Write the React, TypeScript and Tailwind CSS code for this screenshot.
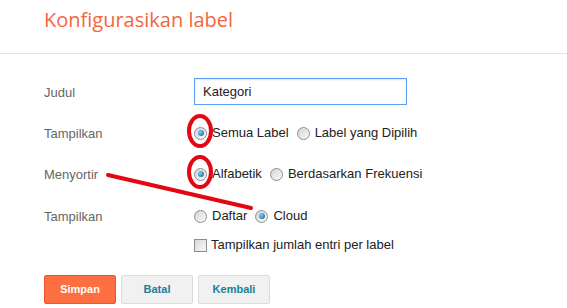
import React from 'react'

const Radio = ({ checked }: { checked?: boolean }) => (
    <span className="relative inline-block w-[13px] h-[13px] rounded-full border border-[#8d8d8d] bg-gradient-to-br from-[#d4d4d4] to-[#fafafa] shrink-0">
        {checked && (
            <span className="absolute left-[2.5px] top-[2.5px] w-[6px] h-[6px] rounded-full bg-[radial-gradient(circle_at_35%_35%,#7fd0ff,#0a5a8a)]" />
        )}
    </span>
)

const Option = ({ checked, label }: { checked?: boolean; label: string }) => (
    <label className="flex items-center gap-[5px] text-[13px] text-[#222]">
        <Radio checked={checked} />
        <span>{label}</span>
    </label>
)

export default function App() {
    return (
        <div className="relative w-[567px] h-[308px] bg-white overflow-hidden font-['Liberation_Sans',Arial,sans-serif]">
            <div className="h-[54px] border-b border-[#e5e5e5] pl-[44px] pt-[6px]">
                <h1 className="font-['Open_Sans',sans-serif] text-[20px] text-[#f4663d] leading-[28px]">
                    Konfigurasikan label
                </h1>
            </div>

            <div className="pl-[44px] pt-[24px] flex flex-col">
                <div className="flex items-center h-[27px]">
                    <span className="w-[150px] text-[13px] text-[#666] pt-[2px]">Judul</span>
                    <div className="w-[213px] h-[27px] border border-[#5a9ef5] px-[8px] flex items-center text-[13px] text-[#222] shadow-[inset_0_1px_2px_rgba(0,0,0,0.1)]">
                        Kategori
                    </div>
                </div>

                <div className="flex items-center h-[20px] mt-[18px]">
                    <span className="w-[150px] text-[13px] text-[#666] pt-[2px]">Tampilkan</span>
                    <div className="flex items-center gap-[8px]">
                        <Option checked label="Semua Label" />
                        <Option label="Label yang Dipilih" />
                    </div>
                </div>

                <div className="flex items-center h-[20px] mt-[21px]">
                    <span className="w-[150px] text-[13px] text-[#666] pt-[2px]">Menyortir</span>
                    <div className="flex items-center gap-[8px]">
                        <Option checked label="Alfabetik" />
                        <Option label="Berdasarkan Frekuensi" />
                    </div>
                </div>

                <div className="flex items-center h-[20px] mt-[22px]">
                    <span className="w-[150px] text-[13px] text-[#666] pt-[2px]">Tampilkan</span>
                    <div className="flex items-center gap-[8px]">
                        <Option label="Daftar" />
                        <Option checked label="Cloud" />
                    </div>
                </div>

                <div className="flex items-center h-[20px] mt-[9px] pl-[150px]">
                    <label className="flex items-center gap-[4px] text-[13px] text-[#222]">
                        <span className="w-[13px] h-[13px] border border-[#8d8d8d] bg-gradient-to-br from-[#d8d8d8] to-[#fafafa]" />
                        <span>Tampilkan jumlah entri per label</span>
                    </label>
                </div>

                <div className="flex gap-[5px] mt-[20px]">
                    <button className="w-[72px] h-[29px] bg-[#fd6e40] border border-[#e8582a] rounded-[2px] text-white text-[11px] font-bold">
                        Simpan
                    </button>
                    <button className="w-[72px] h-[29px] bg-[#f1f1f1] border border-[#dcdcdc] rounded-[2px] text-[#1a7f9a] text-[11px] font-bold">
                        Batal
                    </button>
                    <button className="w-[72px] h-[29px] bg-[#f1f1f1] border border-[#dcdcdc] rounded-[2px] text-[#1a7f9a] text-[11px] font-bold">
                        Kembali
                    </button>
                </div>
            </div>

            <svg className="absolute inset-0 pointer-events-none" width="567" height="308">
                <ellipse cx="200" cy="131" rx="11" ry="15" fill="none" stroke="#e30613" strokeWidth="4" />
                <ellipse cx="200" cy="172" rx="11" ry="15" fill="none" stroke="#e30613" strokeWidth="4" />
                <line x1="108" y1="175" x2="251" y2="208" stroke="#e30613" strokeWidth="4" strokeLinecap="round" />
            </svg>
        </div>
    )
}
